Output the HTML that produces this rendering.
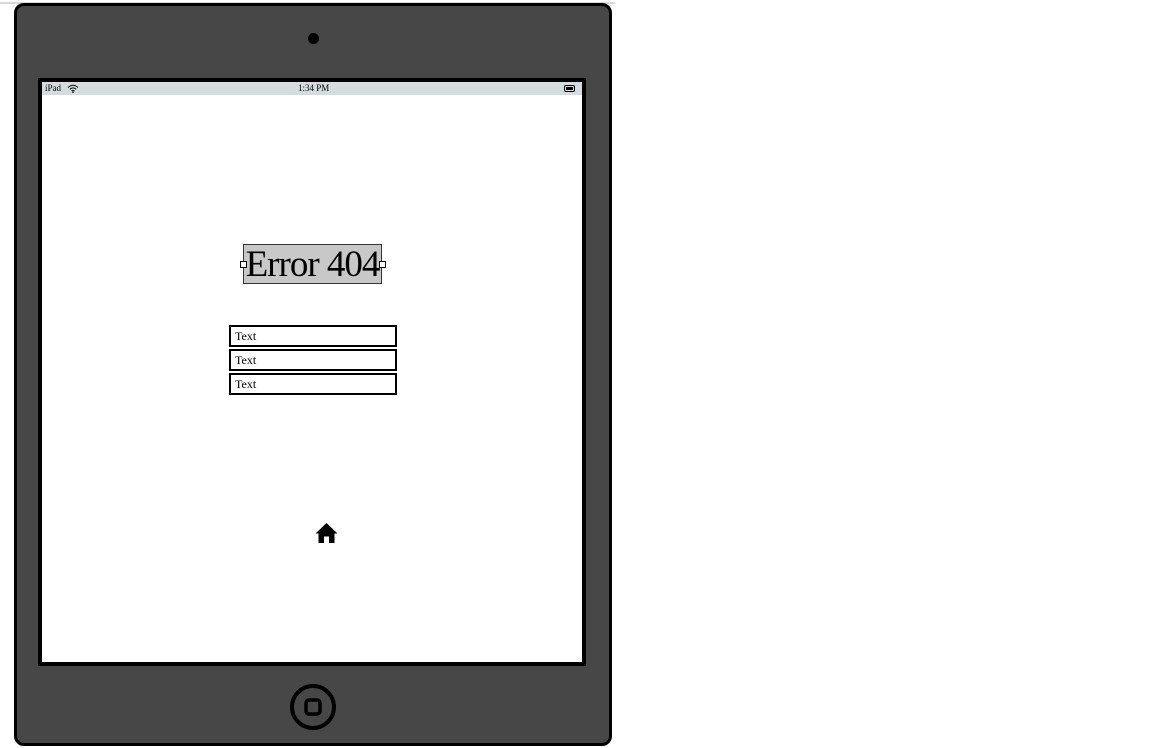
<!DOCTYPE html>
<html><head><style>
body{margin:0;width:1152px;height:748px;background:#fff;position:relative;overflow:hidden;font-family:"Liberation Serif",serif}
.a{position:absolute}
</style></head><body>
<div class="a" style="left:0;top:2px;width:615px;height:2px;background:#d8d8d8"></div>
<div class="a" style="left:14px;top:3px;width:592px;height:737px;background:#474747;border:3px solid #000;border-radius:10px"></div>
<div class="a" style="left:308px;top:33px;width:11px;height:11px;border-radius:50%;background:#000"></div>
<div class="a" style="left:38px;top:78px;width:540px;height:580px;background:#fff;border:4px solid #000"></div>
<div class="a" style="left:42px;top:82px;width:540px;height:13px;background:#d5dcdf;font-size:9px;line-height:13px">
<span class="a" style="left:3px">iPad</span>
<svg class="a" style="left:25px;top:2px" width="12" height="9" viewBox="0 0 12 9"><path d="M1 3.5Q6 -1 11 3.5M2.8 5.3Q6 2.5 9.2 5.3M4.5 7Q6 6 7.5 7" fill="none" stroke="#000" stroke-width="1"/><circle cx="6" cy="8.2" r=".8"/></svg>
<span class="a" style="left:256px">1:34 PM</span>
<div class="a" style="left:522px;top:3px;width:9px;height:5px;border:1px solid #000;border-radius:2px"><div style="margin:1px;width:7px;height:3px;background:#000"></div></div>
</div>
<div class="a" style="left:243px;top:244px;width:137px;height:38px;background:#c8c8c8;border:1px solid #333;font-size:37px;line-height:40px;text-align:center;white-space:nowrap;letter-spacing:-1px;overflow:visible">Error 404</div>
<div class="a" style="left:240px;top:261px;width:5px;height:5px;background:#fff;border:1px solid #000"></div>
<div class="a" style="left:379px;top:261px;width:5px;height:5px;background:#fff;border:1px solid #000"></div>
<div class="a" style="left:229px;top:325px;width:164px;height:18px;border:2px solid #000;font-size:12px;line-height:18px"><span style="margin-left:4px">Text</span></div>
<div class="a" style="left:229px;top:349px;width:164px;height:18px;border:2px solid #000;font-size:12px;line-height:18px"><span style="margin-left:4px">Text</span></div>
<div class="a" style="left:229px;top:373px;width:164px;height:18px;border:2px solid #000;font-size:12px;line-height:18px"><span style="margin-left:4px">Text</span></div>
<svg class="a" style="left:315px;top:522px" width="23" height="22" viewBox="0 0 23 22"><path d="M11.5 1L0.5 11.5H3.5V21H9V14.5H14V21H19.5V11.5H22.5Z" fill="#000"/></svg>
<svg class="a" style="left:288px;top:682px" width="50" height="50"><circle cx="25" cy="25" r="21" fill="none" stroke="#000" stroke-width="4"/><rect x="18" y="18" width="14" height="14" rx="3" fill="none" stroke="#000" stroke-width="3.5"/></svg>
</body></html>
